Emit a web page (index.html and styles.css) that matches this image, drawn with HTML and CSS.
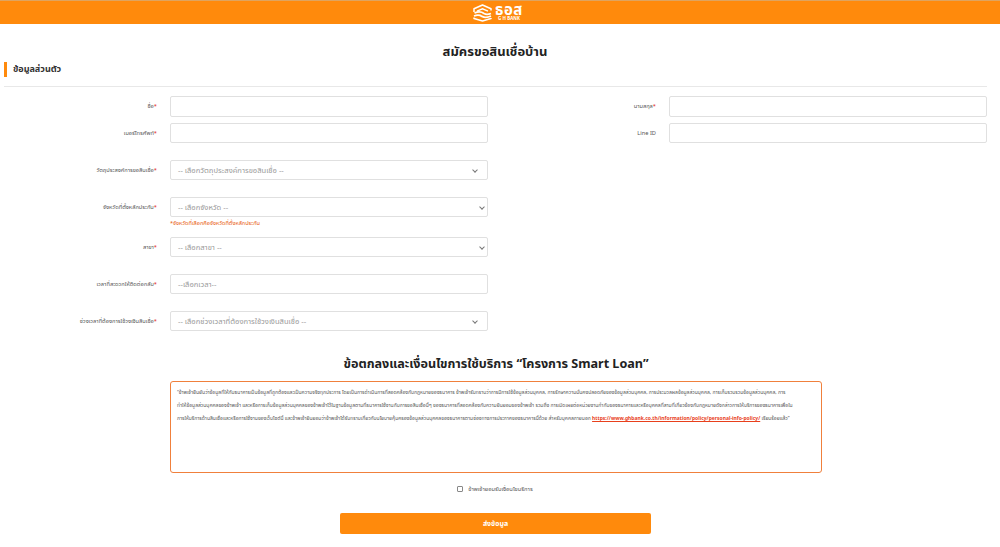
FILE: index.html
```html
<!DOCTYPE html>
<html lang="th">
<head>
    <meta charset="UTF-8">
    <title>สมัครขอสินเชื่อบ้าน</title>
    <link rel="stylesheet" href="styles.css">
</head>
<body>
    <!-- แถบหัวเว็บ -->
    <header class="topbar">
        <svg class="logo-icon" viewBox="0 0 19 18" width="19" height="18">
            <path d="M1 8 V4.8 L9.5 1 L18 4.8 V6.5" fill="none" stroke="#fff" stroke-width="1.5" stroke-linejoin="round"/>
            <path d="M4 7.2 L9.5 4.8 L15 7.2" fill="none" stroke="#fff" stroke-width="1.3"/>
            <path d="M1.5 9 C5 7.5 9 8 11 9.5 C13 10.8 15.5 10.5 18 9.5" fill="none" stroke="#fff" stroke-width="1.8"/>
            <path d="M1 12 C4 10.8 7 11 9 12.4 C12 14 15 13.5 18 12" fill="none" stroke="#fff" stroke-width="1.8"/>
            <path d="M1 13.5 V14.5 L9.5 17 L18 14.5 V14" fill="none" stroke="#fff" stroke-width="1.5" stroke-linejoin="round"/>
        </svg>
        <div class="logo-text">
            <span class="logo-th">ธอส</span>
            <span class="logo-en">G H BANK</span>
        </div>
    </header>

    <h1 class="page-title">สมัครขอสินเชื่อบ้าน</h1>

    <div class="section-head">
        <h2>ข้อมูลส่วนตัว</h2>
    </div>

    <form class="form">
        <div class="form-row row-name">
            <label>ชื่อ<i>*</i></label>
            <input type="text">
            <label>นามสกุล<i>*</i></label>
            <input type="text">
        </div>
        <div class="form-row row-phone">
            <label>เบอร์โทรศัพท์<i>*</i></label>
            <input type="text">
            <label>Line ID</label>
            <input type="text">
        </div>
        <div class="form-row row-gap">
            <label>วัตถุประสงค์การขอสินเชื่อ<i>*</i></label>
            <div class="fake-select chevron-far">-- เลือกวัตถุประสงค์การขอสินเชื่อ --</div>
        </div>
        <div class="form-row row-gap">
            <label>จังหวัดที่ตั้งหลักประกัน<i>*</i></label>
            <div>
                <div class="fake-select">-- เลือกจังหวัด --</div>
                <p class="note">*จังหวัดที่เลือกคือจังหวัดที่ตั้งหลักประกัน</p>
            </div>
        </div>
        <div class="form-row row-branch">
            <label>สาขา<i>*</i></label>
            <div class="fake-select">-- เลือกสาขา --</div>
        </div>
        <div class="form-row row-gap">
            <label>เวลาที่สะดวกให้ติดต่อกลับ<i>*</i></label>
            <div class="fake-input">--เลือกเวลา--</div>
        </div>
        <div class="form-row row-gap">
            <label>ช่วงเวลาที่ต้องการใช้วงเงินสินเชื่อ<i>*</i></label>
            <div class="fake-select chevron-far">-- เลือกช่วงเวลาที่ต้องการใช้วงเงินสินเชื่อ --</div>
        </div>
    </form>

    <h2 class="terms-title">ข้อตกลงและเงื่อนไขการใช้บริการ “โครงการ Smart Loan”</h2>

    <div class="terms-box">
        <p>“ข้าพเจ้ายืนยันว่าข้อมูลที่ให้กับธนาคารเป็นข้อมูลที่ถูกต้องและเป็นความจริงทุกประการ โดยเป็นการดำเนินการที่สอดคล้องกับกฎหมายของธนาคาร ข้าพเจ้ารับทราบว่าการมีการใช้ข้อมูลส่วนบุคคล, การรักษาความมั่นคงปลอดภัยของข้อมูลส่วนบุคคล, การประมวลผลข้อมูลส่วนบุคคล, การเก็บรวบรวมข้อมูลส่วนบุคคล, การ</p>
        <p>ทำให้ข้อมูลส่วนบุคคลของข้าพเจ้า และหรือการเก็บข้อมูลส่วนบุคคลของข้าพเจ้าไว้ในฐานข้อมูลตามที่ธนาคารใช้งานกับการขอสินเชื่อนี้ๆ ของธนาคารที่สอดคล้องกับความยินยอมของข้าพเจ้า รวมถึง การเปิดเผยต่อหน่วยงานกำกับของธนาคารและหรือบุคคลที่สามที่เกี่ยวข้องกับกฎหมายดังกล่าวการให้บริการของธนาคารเพื่อใน</p>
        <p>การให้บริการด้านสินเชื่อและหรือการใช้งานของเว็บไซต์นี้ และข้าพเจ้ายินยอมว่าข้าพเจ้าได้รับทราบเกี่ยวกับนโยบายคุ้มครองข้อมูลส่วนบุคคลของธนาคารตามช่องทางการประกาศของธนาคารนี้ด้วย สำหรับบุคคลภายนอก <a href="#">https://www.ghbank.co.th/information/policy/personal-info-policy/</a> เรียบร้อยแล้ว”</p>
    </div>

    <label class="accept">
        <input type="checkbox">
        <span>ข้าพเจ้ายอมรับเงื่อนไขบริการ</span>
    </label>

    <button class="submit" type="button">ส่งข้อมูล</button>
</body>
</html>
```

FILE: styles.css
```css
/* โครงหน้า */
body {
    margin: 0;
    background-color: #ffffff;
    color: #333333;
    font-family: "Noto Sans", "Noto Sans Thai", "Open Sans", "DejaVu Sans", sans-serif;
    display: flex;
    flex-direction: column;
    height: 547px;
    overflow: hidden;
}

.topbar {
    box-sizing: border-box;
    height: 24px;
    border-top: 1px solid #dfa45f;
    background-color: #ff8a0c;
    display: flex;
    align-items: center;
    justify-content: center;
    gap: 3px;
    padding-right: 4px;
}

.logo-text {
    display: flex;
    flex-direction: column;
    align-items: center;
    margin-top: -2px;
    color: #ffffff;
    line-height: 1;
}

.logo-th {
    font-size: 15px;
    letter-spacing: 0.5px;
    font-weight: 700;
    line-height: 13px;
}

.logo-en {
    font-size: 4.5px;
    font-weight: 700;
    line-height: 5px;
}

.page-title {
    margin: 17px 0 0;
    padding-right: 10px;
    font-size: 13px;
    line-height: 20px;
    font-weight: 700;
    color: #222222;
    text-align: center;
}

.section-head {
    margin: 1px 0 0 4px;
    padding: 0 0 2px 6px;
    box-sizing: border-box;
    height: 15px;
    border-left: 3px solid #ff8a0c;
    display: flex;
    align-items: center;
}

.section-head h2 {
    margin: 0;
    font-size: 9px;
    font-weight: 700;
    color: #333333;
}

.form {
    margin: 9px 0 0 4px;
    padding-top: 9px;
    width: 983px;
    border-top: 1px solid #e8e8e8;
}

.form-row {
    display: grid;
    grid-template-columns: 153px 318px 155px 318px;
    column-gap: 13px;
    align-items: start;
}

.form-row label {
    font-size: 5.7px;
    line-height: 20px;
    color: #555555;
    text-align: right;
}

.form-row label i {
    color: #e02020;
    font-style: normal;
}

.form-row input,
.fake-select,
.fake-input {
    box-sizing: border-box;
    width: 318px;
    height: 20px;
    margin: 0;
    border: 1px solid #e0e0e0;
    border-radius: 2px;
    background: #ffffff;
}

.row-name input {
    height: 21px;
}

.row-phone {
    margin-top: 6px;
}

.row-gap {
    margin-top: 17px;
}

.row-branch {
    margin-top: 8px;
}

.fake-select,
.fake-input {
    padding-left: 7px;
    font-size: 7.6px;
    line-height: 18px;
    color: #9a9a9a;
    position: relative;
}

/* ลูกศรของ select */
.fake-select::after {
    content: "";
    position: absolute;
    right: 3px;
    top: 7px;
    width: 3px;
    height: 3px;
    border-right: 1px solid #777777;
    border-bottom: 1px solid #777777;
    transform: rotate(45deg);
}

.chevron-far::after {
    right: 10px;
}

.note {
    margin: 0;
    height: 12px;
    font-size: 5.6px;
    line-height: 12px;
    color: #e8590c;
}

.terms-title {
    margin: 23px 0 0;
    padding-right: 8px;
    font-size: 12.6px;
    line-height: 20px;
    font-weight: 700;
    color: #222222;
    text-align: center;
}

.terms-box {
    box-sizing: border-box;
    margin: 7px 0 0 170px;
    width: 652px;
    height: 92px;
    padding: 4px 6px;
    border: 1px solid #f0803c;
    border-radius: 3px;
}

.terms-box p {
    margin: 0;
    font-size: 5px;
    line-height: 13px;
    color: #555555;
    white-space: nowrap;
}

.terms-box a {
    color: #e8401c;
    font-weight: 700;
}

.accept {
    margin: 10px auto 0;
    padding-right: 10px;
    display: flex;
    align-items: center;
    gap: 5px;
    font-size: 5.8px;
    line-height: 12px;
    color: #555555;
}

.accept input {
    appearance: none;
    box-sizing: border-box;
    margin: 0;
    width: 6px;
    height: 6px;
    border: 1px solid #888888;
    border-radius: 1px;
    background: #ffffff;
}

.submit {
    margin: 18px 0 0 340px;
    width: 311px;
    height: 21px;
    border: none;
    border-radius: 2px;
    background-color: #ff8a0c;
    color: #ffffff;
    font-family: inherit;
    font-size: 7px;
    font-weight: 700;
}
```
